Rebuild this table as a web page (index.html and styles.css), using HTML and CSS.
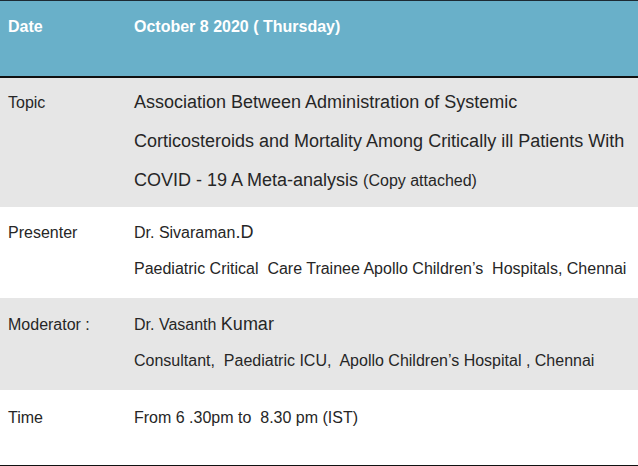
FILE: index.html
```html
<!DOCTYPE html>
<html lang="en">
<head>
<meta charset="utf-8">
<title>Schedule</title>
<link rel="stylesheet" href="styles.css">
</head>
<body>
<div class="sheet">
  <div class="row head">
    <div class="label">Date</div>
    <div class="value">October 8 2020 ( Thursday)</div>
  </div>
  <div class="row topic gray">
    <div class="label">Topic</div>
    <div class="value big">Association Between Administration of Systemic Corticosteroids and Mortality Among Critically ill Patients With COVID - 19 A Meta-analysis <span class="small">(Copy attached)</span></div>
  </div>
  <div class="row presenter">
    <div class="label">Presenter</div>
    <div class="value">
      <div class="line">Dr. Sivaraman<span class="lg">.D</span></div>
      <div class="line pre">Paediatric Critical  Care Trainee Apollo Children’s  Hospitals, Chennai</div>
    </div>
  </div>
  <div class="row moderator gray">
    <div class="label">Moderator :</div>
    <div class="value">
      <div class="line">Dr. Vasanth <span class="lg">Kumar</span></div>
      <div class="line pre">Consultant,  Paediatric ICU,  Apollo Children’s Hospital , Chennai</div>
    </div>
  </div>
  <div class="row time">
    <div class="label">Time</div>
    <div class="value">
      <div class="line pre">From 6 .30pm to  8.30 pm (IST)</div>
    </div>
  </div>
</div>
</body>
</html>
```
FILE: styles.css
```css
html, body {
  margin: 0;
  padding: 0;
  background: #ffffff;
}
body {
  font-family: "Liberation Sans", Arial, sans-serif;
  color: #262626;
  width: 638px;
  height: 466px;
  overflow: hidden;
}
.sheet {
  display: flex;
  flex-direction: column;
  border-top: 1px solid #1d2a33;
  border-bottom: 3px solid #111111;
}
.row {
  display: flex;
  align-items: baseline;
  padding-left: 8px;
  font-size: 16px;
}
.label {
  width: 126px;
  flex: none;
}
.value {
  flex: 1;
}
.gray {
  background: #e6e6e6;
}
.head {
  background: #69b0c9;
  color: #ffffff;
  font-weight: bold;
  font-size: 16px;
  line-height: 20px;
  padding-top: 16px;
  padding-bottom: 39px;
  border-bottom: 2px solid #111111;
}
.topic {
  padding-top: 5px;
  padding-bottom: 7px;
}
.big {
  font-size: 18px;
  line-height: 39px;
}
.small {
  font-size: 16px;
}
.line {
  line-height: 36px;
}
.pre {
  white-space: pre;
}
.lg {
  font-size: 18px;
}
.presenter {
  padding-top: 7px;
  padding-bottom: 11px;
}
.moderator {
  padding-top: 8px;
  padding-bottom: 11px;
}
.time {
  padding-top: 10px;
  padding-bottom: 29px;
}
```
